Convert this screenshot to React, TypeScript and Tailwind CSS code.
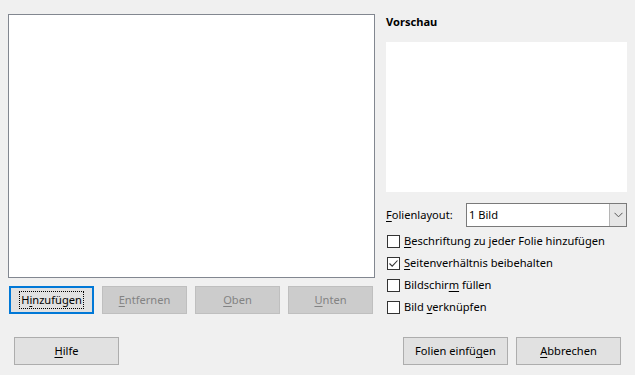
import React from "react";

const U = ({ children }: { children: React.ReactNode }) => (
  <span className="underline underline-offset-[2px] decoration-[1px]">{children}</span>
);

function Btn({
  children,
  disabled,
  focused,
  w,
}: {
  children: React.ReactNode;
  disabled?: boolean;
  focused?: boolean;
  w: string;
}) {
  const base = "h-[28px] flex items-center justify-center box-border";
  if (focused)
    return (
      <div className={`${base} ${w} border-2 border-[#0078d7] bg-[#e1e1e1] text-black`}>
        <span className="border border-dotted border-black px-[1px] leading-[16px]">{children}</span>
      </div>
    );
  if (disabled)
    return (
      <div className={`${base} ${w} border border-[#bfbfbf] bg-[#cccccc] text-[#838383]`}>{children}</div>
    );
  return <div className={`${base} ${w} border border-[#adadad] bg-[#e1e1e1] text-black`}>{children}</div>;
}

function Check({ checked, children }: { checked?: boolean; children: React.ReactNode }) {
  return (
    <div className="h-[22px] flex items-center">
      <div className="ml-[1px] w-[13px] h-[13px] border border-[#333333] bg-white flex items-center justify-center box-border">
        {checked && (
          <svg width="11" height="11" viewBox="0 0 11 11">
            <path d="M1.5 5.5 L4.2 8.2 L9.5 2.5" fill="none" stroke="#333" strokeWidth="1.1" />
          </svg>
        )}
      </div>
      <span className="ml-[4px]">{children}</span>
    </div>
  );
}

export default function App() {
  return (
    <div
      className="w-[635px] h-[375px] bg-[#f0f0f0] text-[11.1px] leading-[16px] text-black overflow-hidden"
      style={{ fontFamily: '"Noto Sans", "Open Sans", sans-serif' }}
    >
      <div className="flex pt-[14px]">
        <div className="ml-[8px] w-[367px] flex flex-col">
          <div className="h-[264px] border border-[#828790] bg-white" />
          <div className="mt-[8px] ml-[1px] flex gap-[8px]">
            <Btn w="w-[85px]" focused>
              H<U>i</U>nzufügen
            </Btn>
            <Btn w="w-[85px]" disabled>
              <U>E</U>ntfernen
            </Btn>
            <Btn w="w-[85px]" disabled>
              <U>O</U>ben
            </Btn>
            <Btn w="w-[85px]" disabled>
              <U>U</U>nten
            </Btn>
          </div>
        </div>
        <div className="ml-[11px] w-[241px] flex flex-col">
          <div className="h-[16px] font-bold">Vorschau</div>
          <div className="mt-[12px] h-[150px] bg-white" />
          <div className="mt-[11px] h-[24px] flex items-center">
            <span className="w-[80px]">
              <U>F</U>olienlayout:
            </span>
            <div className="flex-1 h-[24px] border border-[#7a7a7a] bg-white flex items-stretch box-border">
              <div className="flex-1 pl-[2px] flex items-center">1 Bild</div>
              <div className="w-[17px] bg-[#e6e6e6] border-l border-[#b5b5b5] flex items-center justify-center">
                <svg width="9" height="6" viewBox="0 0 9 6">
                  <path d="M0.5 0.8 L4.5 4.8 L8.5 0.8" fill="none" stroke="#555" strokeWidth="1" />
                </svg>
              </div>
            </div>
          </div>
          <div className="mt-[3px] flex flex-col">
            <Check>
              <U>B</U>eschriftung zu jeder Folie hinzufügen
            </Check>
            <Check checked>
              <U>S</U>eitenverhältnis beibehalten
            </Check>
            <Check>
              Bildschir<U>m</U> füllen
            </Check>
            <Check>
              Bild <U>v</U>erknüpfen
            </Check>
          </div>
        </div>
      </div>
      <div className="mt-[19px] flex">
        <div className="ml-[14px]">
          <Btn w="w-[105px]">
            <U>H</U>ilfe
          </Btn>
        </div>
        <div className="ml-auto mr-[14px] flex gap-[8px]">
          <Btn w="w-[105px]">
            Folien einfü<U>g</U>en
          </Btn>
          <Btn w="w-[105px]">
            <U>A</U>bbrechen
          </Btn>
        </div>
      </div>
    </div>
  );
}
